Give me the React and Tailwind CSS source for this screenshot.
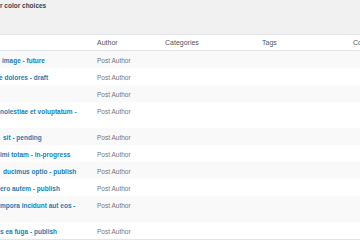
const posts = [
    { title: 'image - future', offset: 'pl-[2px]' },
    { title: 'e dolores - draft', offset: '-ml-[1px]' },
    { title: '', offset: '' },
    { title: 'nolestiae et voluptatum -', offset: '', wrap: true },
    { title: 'sit - pending', offset: 'pl-[3px]' },
    { title: 'imi totam - in-progress', offset: '' },
    { title: 'ducimus optio - publish', offset: 'pl-[3px]' },
    { title: 'ero autem - publish', offset: '' },
    { title: 'mpora incidunt aut eos -', offset: '', wrap: true },
    { title: 's ea fuga - publish', offset: '' },
];

const cols = 'grid grid-cols-[92px_68px_97px_91px_80px]';

const App = () => {
    return (
        <div
            className="w-[360px] h-[240px] overflow-hidden bg-[#f1f1f1]"
            style={{ fontFamily: '"Liberation Sans", Arial, sans-serif' }}
        >
            {/* description line cut off at the top */}
            <p className="pt-[2px] text-[6.5px] leading-[8px] font-bold text-[#3c434a] whitespace-nowrap">
                r color choices
            </p>

            <div className="mt-[24px] w-[428px] bg-white border-t border-b border-[#e2e4e7]">
                {/* header */}
                <div className={`${cols} h-[16px] pt-[2px] items-center border-b border-[#e2e4e7] text-[7px] text-[#50575e]`}>
                    <div />
                    <div className="pl-[5px]">Author</div>
                    <div className="pl-[5px]">Categories</div>
                    <div className="pl-[5px]">Tags</div>
                    <div className="pl-[5px]">Comments</div>
                </div>

                {posts.map((post, i) => (
                    <div
                        key={i}
                        className={`${cols} pt-[5px] pb-[3px] ${i % 2 === 0 ? 'bg-[#f9f9f9]' : 'bg-white'}`}
                    >
                        <div className={`${post.wrap ? 'h-[18px]' : 'h-[9px]'} overflow-hidden`}>
                            <span className={`block ${post.offset} text-[6.5px] leading-[9px] font-bold text-[#1a7fb5] whitespace-nowrap`}>
                                {post.title}
                            </span>
                        </div>
                        <div className="pl-[5px] text-[6.5px] leading-[9px] text-[#72777c] whitespace-nowrap">
                            Post Author
                        </div>
                        <div />
                        <div />
                        <div />
                    </div>
                ))}
            </div>
        </div>
    );
};

export default App;
